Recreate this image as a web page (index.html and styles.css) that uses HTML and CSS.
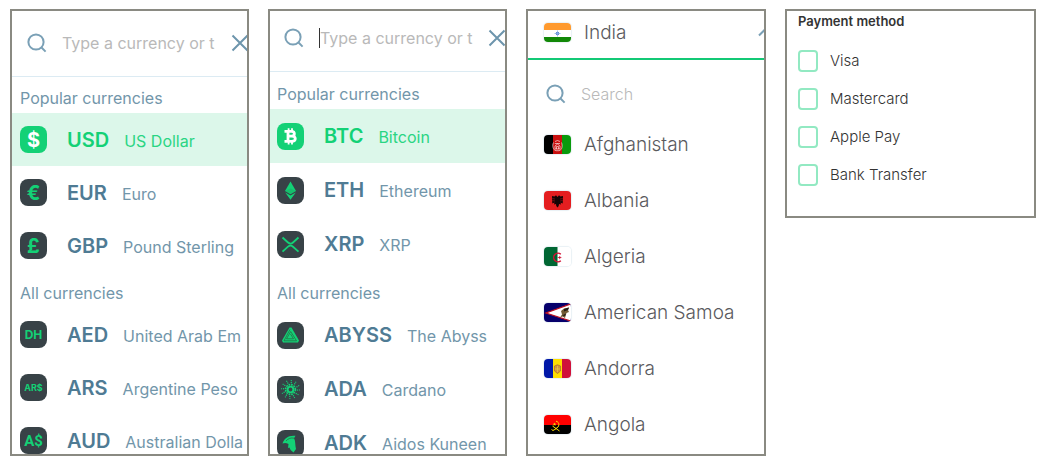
FILE: index.html
```html
<!DOCTYPE html>
<html lang="en">
<head>
<meta charset="utf-8">
<meta name="viewport" content="width=device-width, initial-scale=1">
<title>Currency, country and payment pickers</title>
<link rel="stylesheet" href="styles.css">
</head>
<body>
<main class="board">

<section class="panel fiat" aria-label="Currencies">
  <div class="search">
    <svg class="glass" viewBox="0 0 20 20" aria-hidden="true"><circle cx="9" cy="9" r="7.6"/><path d="M14.5 14.5L18.6 18.6"/></svg>
    <input class="search-input" type="text" aria-label="Search currency" placeholder="Type a currency or t">
    <button class="clear" type="button" aria-label="Clear"><svg viewBox="0 0 18 18"><path d="M1.5 1.5L16.5 16.5M16.5 1.5L1.5 16.5"/></svg></button>
  </div>
  <h2 class="group">Popular currencies</h2>
  <ul class="list">
    <li><button type="button" class="row selected"><span class="coin sign">$</span><b class="code">USD</b><span class="name">US Dollar</span></button></li>
    <li><button type="button" class="row"><span class="coin sign">€</span><b class="code">EUR</b><span class="name">Euro</span></button></li>
    <li><button type="button" class="row"><span class="coin sign">£</span><b class="code">GBP</b><span class="name">Pound Sterling</span></button></li>
  </ul>
  <h2 class="group">All currencies</h2>
  <ul class="list">
    <li><button type="button" class="row"><span class="coin two">DH</span><b class="code">AED</b><span class="name">United Arab Em</span></button></li>
    <li><button type="button" class="row"><span class="coin three">AR$</span><b class="code">ARS</b><span class="name">Argentine Peso</span></button></li>
    <li><button type="button" class="row"><span class="coin pair">A$</span><b class="code">AUD</b><span class="name">Australian Dolla</span></button></li>
  </ul>
</section>

<section class="panel crypto" aria-label="Cryptocurrencies">
  <div class="search">
    <svg class="glass" viewBox="0 0 20 20" aria-hidden="true"><circle cx="9" cy="9" r="7.6"/><path d="M14.5 14.5L18.6 18.6"/></svg>
    <input class="search-input caret" type="text" aria-label="Search cryptocurrency" placeholder="Type a currency or t">
    <button class="clear" type="button" aria-label="Clear"><svg viewBox="0 0 18 18"><path d="M1.5 1.5L16.5 16.5M16.5 1.5L1.5 16.5"/></svg></button>
  </div>
  <h2 class="group">Popular currencies</h2>
  <ul class="list">
    <li><button type="button" class="row selected"><span class="coin"><svg viewBox="0 0 27 27"><path fill="none" stroke="currentColor" stroke-width="2.8" d="M7.5 8.3H14.5C18.3 8.3 18.3 13.1 14.5 13.1H10.5M14.5 13.1C19.5 13.1 19.5 18.4 14.8 18.4H7.5M11 8.3V18.4"/><path fill="none" stroke="currentColor" stroke-width="1.8" d="M11.6 5.2V8M15 5.2V8M11.6 19V21.6M15 19V21.6"/></svg></span><b class="code">BTC</b><span class="name">Bitcoin</span></button></li>
    <li><button type="button" class="row"><span class="coin"><svg viewBox="0 0 27 27"><path fill="currentColor" d="M13.5 4.5L19 14L13.5 17.2L8 14Z"/><path fill="currentColor" d="M8.200 15.500L13.500 18.600L18.800 15.500L13.500 22.800Z"/><path fill="#20864f" opacity=".25" d="M13.500 11.500L19 14L13.500 17.200L8 14Z"/></svg></span><b class="code">ETH</b><span class="name">Ethereum</span></button></li>
    <li><button type="button" class="row"><span class="coin"><svg viewBox="0 0 27 27"><path fill="none" stroke="currentColor" stroke-width="1.800" d="M5.500 6.500L11 11.500Q13.500 13.700 16 11.500L21.500 6.500M5.500 20.700L11 15.700Q13.500 13.500 16 15.700L21.500 20.700"/></svg></span><b class="code">XRP</b><span class="name">XRP</span></button></li>
  </ul>
  <h2 class="group">All currencies</h2>
  <ul class="list">
    <li><button type="button" class="row"><span class="coin"><svg viewBox="0 0 27 27"><path fill="currentColor" d="M12.500 5.500H14.500L22 18.500L21 20.500H6L5 18.500Z"/><path fill="none" stroke="#27603f" stroke-width=".7" d="M13 7.500L7 18.800H19.500L13.700 9.500L9.500 16.800H16.500L13.500 12"/></svg></span><b class="code">ABYSS</b><span class="name">The Abyss</span></button></li>
    <li><button type="button" class="row"><span class="coin"><svg viewBox="0 0 27 27"><g fill="none" stroke="currentColor"><circle cx="13.500" cy="13.500" r="2.900" stroke-width="1.900"/><circle cx="13.500" cy="13.500" r="4.900" stroke-width="1.600" stroke-dasharray="1.700 .866" /><circle cx="13.500" cy="13.500" r="7" stroke-width="1.200" stroke-dasharray="1.200 2.465"/><circle cx="13.500" cy="13.500" r="9" stroke-width="1.100" stroke-dasharray="1.100 3.612"/></g></svg></span><b class="code">ADA</b><span class="name">Cardano</span></button></li>
    <li><button type="button" class="row"><span class="coin"><svg viewBox="0 0 27 27"><path fill="currentColor" d="M5.500 13.500C7 8.500 11.500 5 18.500 5.800L17 8.200C18.700 11 18 15 19 19L16.500 22.500C14.500 21 13 19.500 12.500 17.500L11 18L11.500 14C9 12.700 7.500 13 5.500 13.500Z"/><path fill="none" stroke="#27603f" stroke-width=".7" d="M9 11C11 8.500 14 7.500 17 8.200"/></svg></span><b class="code">ADK</b><span class="name">Aidos Kuneen</span></button></li>
  </ul>
</section>

<section class="panel countries" aria-label="Countries">
  <button type="button" class="current">
    <svg class="flag" viewBox="0 0 27 19"><path fill="#fff" d="M0 0H27V19H0Z"/><path fill="#ff9a2e" d="M0 0H27V7H0Z"/><path fill="#128807" d="M0 14H27V19H0Z"/><circle cx="13.500" cy="10.500" r="1.800" fill="#4c7bd0"/><path stroke="#8eaee6" stroke-width=".8" d="M13.500 7.500V13.500M10.500 10.500H16.500"/></svg>
    <span>India</span>
    <svg class="chevron" viewBox="0 0 16 10" aria-hidden="true"><path d="M1 8.500L8 1.500L15 8.500"/></svg>
  </button>
  <div class="find">
    <svg class="glass" viewBox="0 0 20 20" aria-hidden="true"><circle cx="9" cy="9" r="7.600"/><path d="M14.500 14.500L18.600 18.600"/></svg>
    <input class="search-input" type="text" aria-label="Search country" placeholder="Search">
  </div>
  <ul class="list">
    <li><button type="button" class="country"><svg class="flag" viewBox="0 0 27 19"><path d="M0 0H9V19H0Z"/><path fill="#c9100f" d="M9 0H18V19H9Z"/><path fill="#0a9a0c" d="M18 0H27V19H18Z"/><path fill="none" stroke="#fff" stroke-opacity=".75" stroke-width=".8" d="M9.500 7.500C7.800 11 9.200 15 12 15.700H15C18 15 19 11 17.500 7.500M10.800 8.500H16M11 11L13.500 9L16 11V14H11ZM12.500 14V11.500H14.500V14M11 6.500L13.500 5.500L16 6.500"/></svg><span>Afghanistan</span></button></li>
    <li><button type="button" class="country"><svg class="flag" viewBox="0 0 27 19"><path fill="#e41e20" d="M0 0H27V19H0Z"/><path fill="#140405" d="M13.500 6L12 4.300L10.500 5.500L8 5L8.300 12.500L10.500 11.500L10 13.500L12 13L12.300 15L13.500 16.500L14.700 15L15 13L17 13.500L16.500 11.500L18.700 12.500L19 5L16.500 5.500L15 4.300Z"/><path stroke="#a01819" stroke-width=".6" d="M8.300 7.500L11 8M8.300 9.500L11 10M18.700 7.500L16 8M18.700 9.500L16 10"/></svg><span>Albania</span></button></li>
    <li><button type="button" class="country"><svg class="flag" viewBox="0 0 27 19"><path fill="#fff" d="M0 0H27V19H0Z"/><path fill="#006633" d="M0 0H13.500V19H0Z"/><path fill="none" stroke="#d21034" stroke-width="1.500" d="M16.800 7.200A4.300 4.300 0 1 0 16.800 13.700"/><path fill="#d21034" d="M13 10.500L15 10L16 8.500L16.300 10L18 10.500L16.300 11L16 12.500L15 11Z"/></svg><span>Algeria</span></button></li>
    <li><button type="button" class="country"><svg class="flag" viewBox="0 0 27 19"><path fill="#06006b" d="M0 0H27V19H0Z"/><path fill="#fff" stroke="#bd1021" stroke-width="1.300" d="M28 .5L2 10L28 18.500Z"/><path fill="#725b34" d="M17 8L20 5.500L25 4.500L24 7L25 9L22.500 10L21 15L18.500 13.500L16 14.500L18 11.500Z"/><path fill="#241d17" d="M20 6L25 4.500L24 7L20 8.500ZM18 12.500L22 10.500L21 13Z"/></svg><span>American Samoa</span></button></li>
    <li><button type="button" class="country"><svg class="flag" viewBox="0 0 27 19"><path fill="#0018a8" d="M0 0H9V19H0Z"/><path fill="#fedf00" d="M9 0H18V19H9Z"/><path fill="#d0103a" d="M18 0H27V19H18Z"/><path fill="#d79638" stroke="#a96a32" stroke-width=".7" d="M10.500 7L13.500 5.800L16.500 7V12L13.500 14.500L10.500 12Z"/><path stroke="#e8c948" stroke-width=".8" d="M13.500 7V13M11 10H16"/></svg><span>Andorra</span></button></li>
    <li><button type="button" class="country"><svg class="flag" viewBox="0 0 27 19"><path fill="#f00" d="M0 0H27V10H0Z"/><path d="M0 10H27V19H0Z"/><path fill="none" stroke="#ffdc00" stroke-width="1" d="M12 6.200C16 7 15.800 12.500 11.500 13.500M8.500 11L15.500 16M7.500 14.500L9 15.500L12.500 13.500"/><path fill="#ffdc00" d="M10.500 7.500L11 8.700H12.300L11.300 9.500L11.600 10.800L10.500 10L9.400 10.800L9.700 9.500L8.700 8.700H10Z"/></svg><span>Angola</span></button></li>
  </ul>
</section>

<fieldset class="panel payment">
  <legend class="payment-title">Payment method</legend>
  <label class="option"><input type="checkbox"><span>Visa</span></label>
  <label class="option"><input type="checkbox"><span>Mastercard</span></label>
  <label class="option"><input type="checkbox"><span>Apple Pay</span></label>
  <label class="option"><input type="checkbox"><span>Bank Transfer</span></label>
</fieldset>

</main>
</body>
</html>
```
FILE: styles.css
```css
* {
  box-sizing: border-box;
}

body {
  margin: 0;
  background: #fff;
  font-family: Inter, "Noto Sans", sans-serif;
}

button,
input {
  font: inherit;
  color: inherit;
}

button {
  border: 0;
  padding: 0;
  background: none;
  text-align: left;
  cursor: pointer;
}

.board {
  display: grid;
  grid-template-columns: 239fr 239fr 240fr 251fr;
  gap: 19px;
  align-items: start;
  padding: 9px 8px 0 10px;
}

.panel {
  min-width: 0;
  margin: 0;
  border: 2px solid #8a8a82;
  background: #fff;
  overflow: hidden;
}

.fiat,
.crypto,
.countries {
  height: calc(100vh - 21px);
}

.fiat {
  --row: 53px;
  --head: 36px;
  --search: 66px;
  --lift: 2px;
  --edge: 8px;
}

.crypto {
  --row: 54px;
  --head: 37px;
  --search: 61px;
  --lift: 7px;
  --edge: 7px;
}

/* Search bar */
.search {
  display: flex;
  align-items: center;
  height: var(--search);
  padding-left: calc(var(--edge) + 7px);
  padding-bottom: var(--lift);
  border-bottom: 1px solid #dcebf3;
}

.glass {
  flex: none;
  width: 20px;
  height: 20px;
  fill: none;
  stroke: #7aa0b6;
  stroke-width: 2;
}

.search-input {
  flex: 1;
  min-width: 0;
  margin-left: 15px;
  border: 0;
  padding: 0;
  outline: 0;
  background: none;
  font-size: 16px;
  line-height: 20px;
}

.search-input::placeholder {
  color: #b9b9b9;
  opacity: 1;
}

.caret {
  border-left: 1px solid #333;
}

.clear {
  flex: none;
  width: 18px;
  height: 18px;
  margin-right: -2px;
}

.crypto .clear {
  margin-right: -1px;
}

.clear svg {
  display: block;
  fill: none;
  stroke: #6d95ac;
  stroke-width: 2;
}

/* Currency lists */
.group {
  display: flex;
  align-items: center;
  height: var(--head);
  margin: 0;
  padding: 6px 0 0 var(--edge);
  color: #7296aa;
  font-size: 16px;
  font-weight: 400;
}

.list {
  margin: 0;
  padding: 0;
  list-style: none;
}

.row {
  display: flex;
  align-items: center;
  width: 100%;
  height: var(--row);
  padding-left: var(--edge);
  color: #7296aa;
  white-space: nowrap;
}

.selected {
  background: #dcf7ea;
  color: #2ad583;
}

.coin {
  display: flex;
  flex: none;
  align-items: center;
  justify-content: center;
  width: 27px;
  height: 27px;
  margin-right: 20px;
  border-radius: 8px;
  background: #384247;
  color: #13d176;
  font-weight: 700;
}

.coin svg {
  display: block;
  width: 27px;
  height: 27px;
}

.selected .coin {
  background: #13d176;
  color: #fff;
}

.sign {
  font-size: 20px;
}

.two {
  font-size: 12px;
}

.three {
  font-size: 9px;
}

.pair {
  font-family: Roboto, sans-serif;
  font-size: 15px;
}

.code {
  margin-right: 15px;
  color: #4f7b94;
  font-size: 20px;
  font-weight: 600;
}

.selected .code {
  color: #13d176;
}

.name {
  padding-top: 2px;
  font-size: 16px;
}

/* Country list */
.current,
.country {
  display: flex;
  align-items: center;
  gap: 13px;
  width: 100%;
  padding-left: 16px;
  color: #5a5a5e;
  font-size: 19px;
  font-weight: 300;
  white-space: nowrap;
}

.current {
  height: 49px;
  padding-bottom: 5px;
  border-bottom: 2px solid #13c976;
}

.country {
  height: 56px;
}

.flag {
  flex: none;
  width: 27px;
  height: 19px;
  border-radius: 4px;
  box-shadow: 0 0 1px 1px #e9f1f5;
}

.chevron {
  flex: none;
  width: 16px;
  height: 10px;
  margin-left: auto;
  margin-right: -10px;
  fill: none;
  stroke: #7aa0b6;
  stroke-width: 2;
}

.find {
  display: flex;
  align-items: center;
  height: 56px;
  padding: 12px 0 0 18px;
  font-weight: 300;
}

/* Payment methods */
.payment {
  display: flex;
  flex-direction: column;
  gap: 16px;
  padding: 0 11px 30px;
  color: #333;
}

.payment-title {
  padding: 0;
  margin: 2px 0 12px;
  float: left;
  margin-bottom: 5px;
  font-size: 13px;
  font-weight: 600;
  line-height: 16px;
}

.option {
  display: flex;
  align-items: center;
  gap: 12px;
  font-size: 15px;
  font-weight: 300;
  line-height: 22px;
}

.option input {
  appearance: none;
  width: 20px;
  height: 22px;
  margin: 0;
  border: 2px solid #92e9c2;
  border-radius: 4px;
  background: #fff;
}

.option input:checked {
  background: #13d176;
}
```
